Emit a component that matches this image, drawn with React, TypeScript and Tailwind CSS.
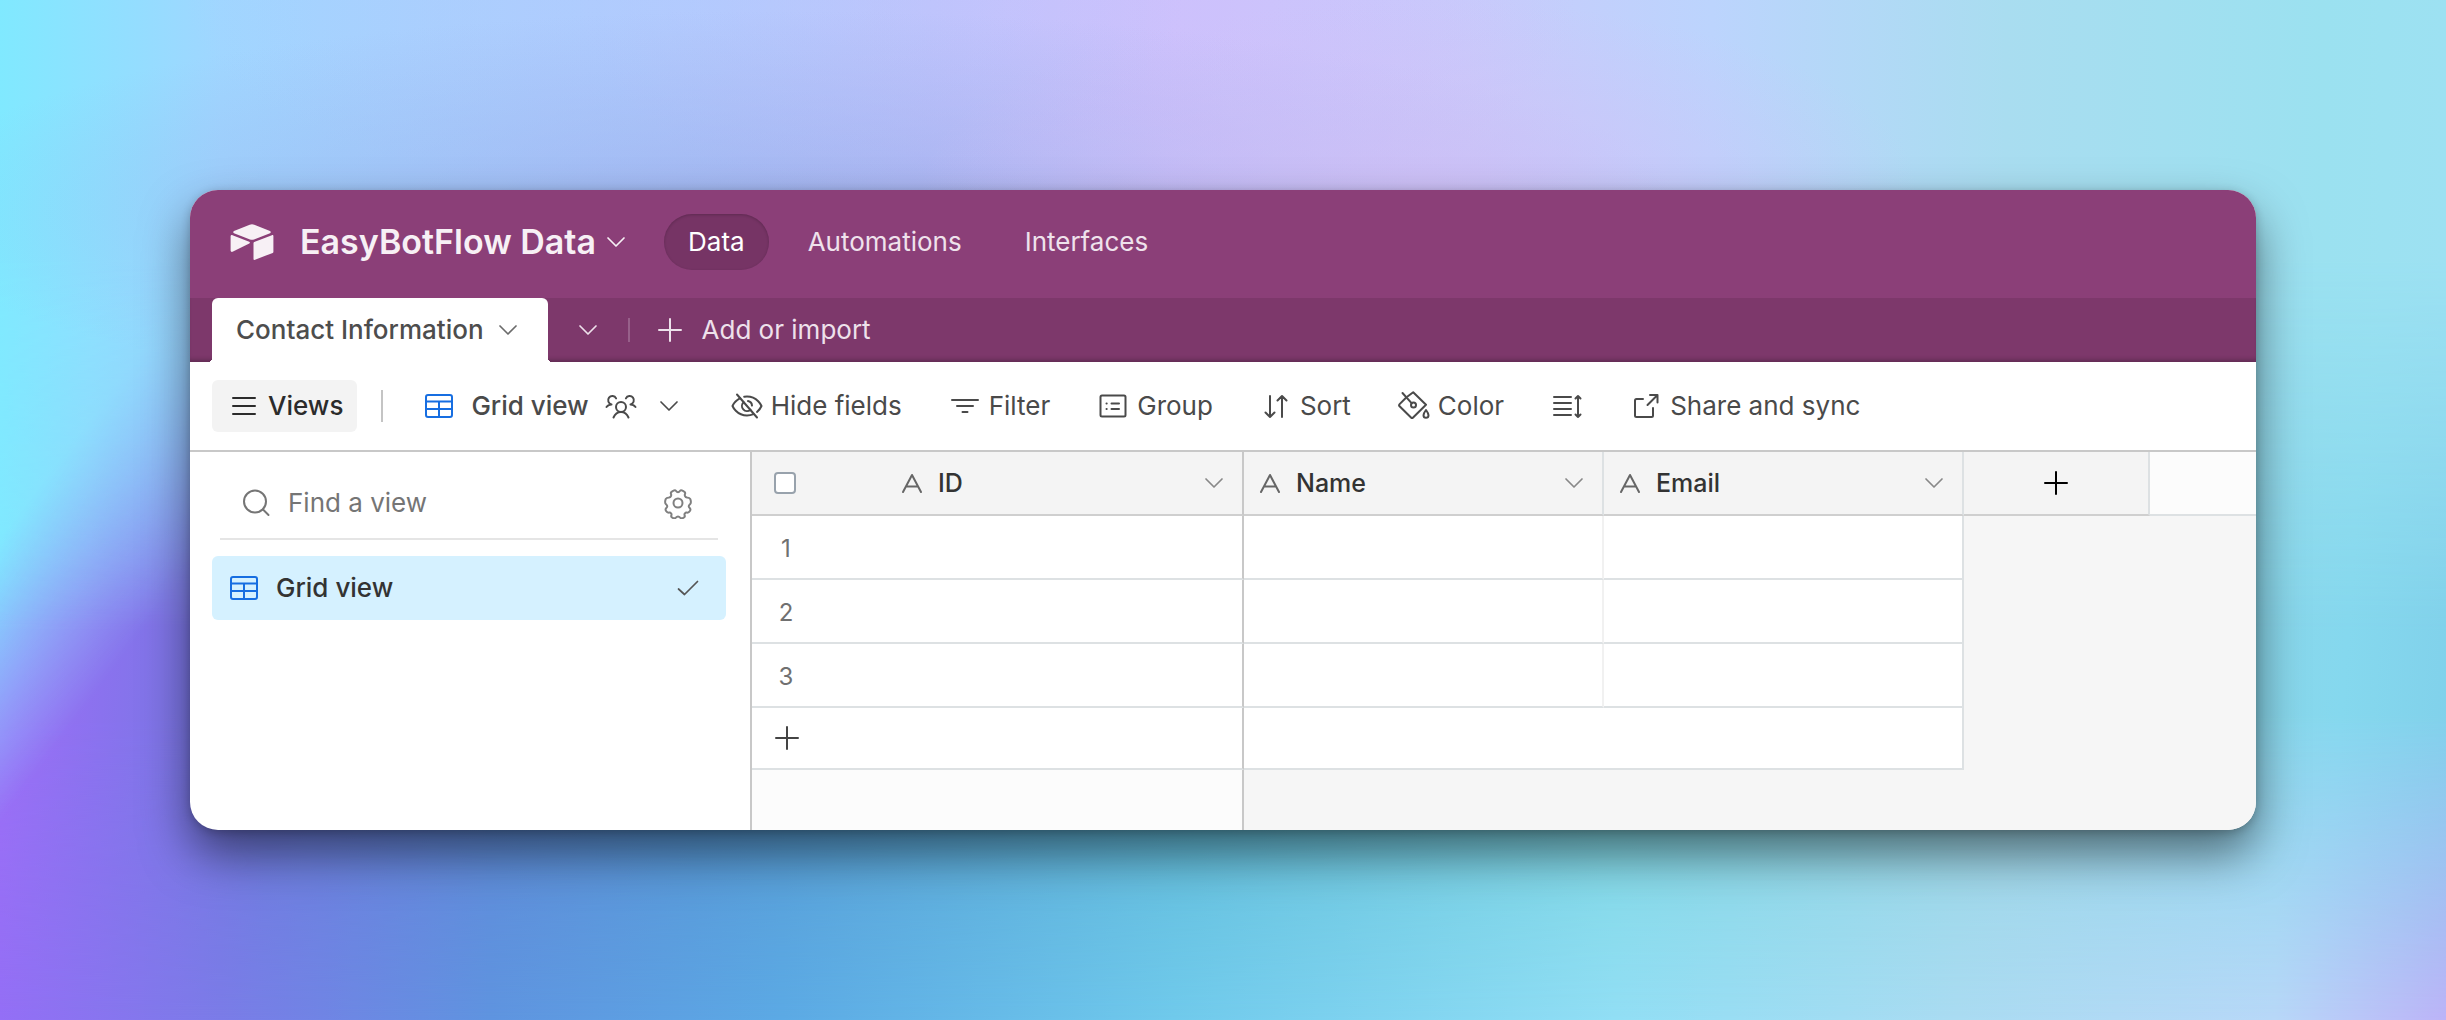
import { ReactNode } from 'react';
import clsx from 'clsx';

const Icon = ({
  className,
  strokeWidth = 2,
  children,
}: {
  className?: string;
  strokeWidth?: number;
  children: ReactNode;
}) => (
  <svg
    viewBox="0 0 32 32"
    fill="none"
    stroke="currentColor"
    strokeWidth={strokeWidth}
    strokeLinecap="round"
    strokeLinejoin="round"
    aria-hidden="true"
    className={clsx('size-8 shrink-0', className)}
  >
    {children}
  </svg>
);

const ChevronIcon = ({ className }: { className?: string }) => (
  <Icon className={className} strokeWidth={1.7}>
    <path d="M8 12l8 8 8-8" />
  </Icon>
);

const PlusIcon = ({ className }: { className?: string }) => (
  <Icon className={className}>
    <path d="M5 16h22M16 5v22" />
  </Icon>
);

const GridIcon = () => (
  <Icon className="text-[#176ee1]">
    <rect x="3" y="5" width="26" height="22" rx="2" />
    <path d="M3 11.5h26M3 19h26M16 11.5V27" />
  </Icon>
);

const MenuIcon = () => (
  <Icon>
    <path d="M5 8h22M5 16h22M5 24h22" />
  </Icon>
);

const PeopleIcon = () => (
  <Icon>
    <circle cx="16" cy="17" r="5" />
    <path d="M8.5 27.5c1.5-3.5 4.2-5.5 7.5-5.5s6 2 7.5 5.5" />
    <path d="M1.5 17c1.2-1.7 2.8-2.6 5-2.6a4.2 4.2 0 1 1 4.6-6" />
    <path d="M30.5 17c-1.2-1.7-2.8-2.6-5-2.6a4.2 4.2 0 1 0-4.6-6" />
  </Icon>
);

const HiddenIcon = () => (
  <Icon>
    <path d="M6 4.5l20 23" />
    <path d="M9.2 8.2C3.8 11 1.5 16 1.5 16S5.500 25.5 16 25.5c2.5 0 4.700-.6 6.500-1.400" />
    <path d="M13.200 6.700c.9-.1 1.800-.2 2.800-.2C26.500 6.500 30.500 16 30.500 16s-1.300 3.200-4.500 5.900" />
    <path d="M12.600 12.300a5 5 0 0 0 6.800 7.400M17 11.100a5 5 0 0 1 4 4.500" />
  </Icon>
);

const FilterIcon = () => (
  <Icon>
    <path d="M3 10h26M8 16h16M13.500 22h5" />
  </Icon>
);

const GroupIcon = () => (
  <Icon>
    <rect x="3.500" y="5.500" width="25" height="21" rx="1.500" />
    <path d="M9.500 13.500h.2M9.500 19h.2M14.500 13.500h7.500M14.500 19h7.500" />
  </Icon>
);

const SortIcon = () => (
  <Icon>
    <path d="M10 6v21M5.500 22.500L10 27l4.500-4.500M22 27V6M17.500 10.500L22 6l4.500 4.500" />
  </Icon>
);

const ColorIcon = () => (
  <Icon>
    <path d="M4.500 3l9.300 10.300" />
    <circle cx="15.500" cy="15" r="2.500" />
    <path d="M8 7.700l-6.400 6.400a1.500 1.500 0 0 0 0 2.100L13 27.500a1.500 1.500 0 0 0 2.100 0L28 14.800 15.200 2.200 9.500 6.500" />
    <path d="M28 20s-2.500 3.300-2.500 5.300a2.500 2.500 0 0 0 5 0C30.500 23.300 28 20 28 20z" />
  </Icon>
);

const RowHeightIcon = () => (
  <Icon>
    <path d="M3 7h17M3 13h17M3 19h17M3 25h17M27 6v21M24.500 8.500L27 6l2.500 2.500M24.500 24.500L27 27l2.500-2.500" />
  </Icon>
);

const ShareIcon = () => (
  <Icon>
    <path d="M13 9H6.500A1.500 1.500 0 0 0 5 10.500v15A1.500 1.500 0 0 0 6.500 27h15a1.500 1.500 0 0 0 1.500-1.500V18" />
    <path d="M17.500 15L27.500 5M20 5h7.500v7.500" />
  </Icon>
);

const SearchIcon = () => (
  <Icon className="text-[#757575]">
    <circle cx="15" cy="14.500" r="11" />
    <path d="M23 22.500l5.500 5.500" />
  </Icon>
);

// six rounded teeth around the hub
const GearIcon = () => (
  <Icon>
    <circle cx="16" cy="16" r="4.500" />
    <path d="M11.500 3.700c1-.6 2-.5 2.600.3.500.8 1 1.200 1.900 1.200s1.400-.4 1.900-1.200c.6-.8 1.600-.9 2.600-.3l1.600.9c1 .6 1.300 1.500.9 2.400-.4.900-.3 1.500.1 2.200.4.800 1 1.100 1.900 1.200 1.600.1 2.800.6 3.200 1.500.9 2.300 1.100 4.100-.2 5.300-.7.600-1.300 1.100-1.300 2 0 .8.600 1.400 1.200 2 .8.800.6 1.800 0 2.800-.7 1.200-1.600 1.800-2.800 1.600-.9-.2-1.600-.1-2.200.7-.5.600-.6 1.300-.2 2.200.4 1-.1 1.700-1 2.200-1.200.7-2.700 1-3.600 0-.6-.8-1.200-1.200-2.100-1.200s-1.500.4-2.100 1.200c-.9 1-2.400.7-3.600 0-.9-.500-1.400-1.200-1-2.200.4-.9.300-1.600-.2-2.200-.6-.8-1.300-.9-2.200-.7-1.200.2-2.100-.4-2.800-1.600-.6-1-.8-2 0-2.800.6-.6 1.200-1.200 1.200-2 0-.9-.6-1.400-1.300-2-1.300-1.200-1.100-3-.2-5.300.4-.9 1.600-1.400 3.200-1.500.9-.1 1.500-.4 1.900-1.200.4-.7.500-1.300.1-2.200-.4-.9-.1-1.800.9-2.400z" />
  </Icon>
);

const CheckIcon = () => (
  <Icon className="text-[#555555]" strokeWidth={1.7}>
    <path d="M6.500 17l6 5.500L25.500 9.500" />
  </Icon>
);

const TextFieldIcon = () => (
  <Icon className="text-[#666666]">
    <path d="M7 25l9-17 9 17M10 19.500h12" />
  </Icon>
);

const Logo = () => (
  <svg viewBox="0 0 44 36" fill="currentColor" aria-hidden="true" className="h-9 w-11 shrink-0">
    <path d="M19.700.7L4 7.100c-1 .4-1 1.700 0 2.100l16 6.200c1.300.5 2.700.5 4 0l16-6.200c1-.4 1-1.700 0-2.100L24.300.7a6 6 0 0 0-4.600 0z" />
    <path d="M23.500 19.100v15.800c0 .7.800 1.200 1.500.9l17.700-6.900c.4-.2.700-.5.700-1V12.100c0-.7-.8-1.200-1.500-.9l-17.700 6.900c-.4.200-.7.600-.7 1z" />
    <path d="M19.300 19.500L2.500 27.800c-.8.400-1.900-.2-1.900-1.200V12.300c0-.8 1-1.500 1.900-1.100l16.700 6.500c1 .4 1 1.300.1 1.800z" />
  </svg>
);

const navItems = ['Data', 'Automations', 'Interfaces'];

const toolbarItems = [
  { label: 'Hide fields', icon: <HiddenIcon /> },
  { label: 'Filter', icon: <FilterIcon /> },
  { label: 'Group', icon: <GroupIcon /> },
  { label: 'Sort', icon: <SortIcon /> },
  { label: 'Color', icon: <ColorIcon /> },
  { label: '', icon: <RowHeightIcon /> },
  { label: 'Share and sync', icon: <ShareIcon /> },
];

const rows = [1, 2, 3];

const Header = () => (
  <header className="flex h-[108px] items-start bg-[#8b3f78] pt-6 pl-10 text-[#f7f0f5]">
    <div className="flex h-14 items-center">
      <Logo />
      <button type="button" className="ml-[26px] flex items-center gap-1">
        <h1 className="text-[34px] leading-10 font-semibold">EasyBotFlow Data</h1>
        <ChevronIcon />
      </button>
      <nav className="ml-8 flex gap-[15px]">
        {navItems.map((item, index) => (
          <a
            key={item}
            href="#"
            className={clsx(
              'flex h-14 items-center rounded-full px-6',
              index === 0
                ? 'bg-[#763465] text-white shadow-[inset_0_1px_3px_rgba(0,0,0,0.2)]'
                : 'text-[#efe2ec]',
            )}
          >
            {item}
          </a>
        ))}
      </nav>
    </div>
  </header>
);

const TabBar = () => (
  <div className="flex h-16 items-center gap-6 bg-[#7d386b] pl-[22px] text-[#eee1eb] shadow-[inset_0_-5px_5px_-3px_rgba(0,0,0,0.25)]">
    <button
      type="button"
      className="relative flex h-16 items-center gap-2 rounded-t-md bg-white px-6 font-medium text-[#4d4d4d]"
    >
      Contact Information
      <ChevronIcon className="text-[#6b6b6b]" />
      <span className="absolute bottom-0 -left-1 size-1 bg-[radial-gradient(circle_at_top_left,transparent_4px,white_4px)]" />
      <span className="absolute -right-1 bottom-0 size-1 bg-[radial-gradient(circle_at_top_right,transparent_4px,white_4px)]" />
    </button>
    <button type="button" aria-label="All tables">
      <ChevronIcon />
    </button>
    <div className="h-6 w-0.5 bg-[#97608a]" />
    <button type="button" className="flex items-center gap-4">
      <PlusIcon />
      Add or import
    </button>
  </div>
);

const Toolbar = () => (
  <div className="flex h-[90px] items-center border-b-2 border-[#c8c8c8] pl-[22px] text-[#4a4a4a]">
    <button
      type="button"
      className="flex h-[52px] items-center gap-2 rounded-md bg-[#f3f3f3] pr-3.5 pl-4 font-medium text-[#2b2b2b]"
    >
      <MenuIcon />
      Views
    </button>
    <div className="ml-6 h-8 w-0.5 bg-[#c4c4c4]" />
    <button type="button" className="ml-10 flex items-center gap-4 font-medium">
      <GridIcon />
      Grid view
      <PeopleIcon />
      <ChevronIcon />
    </button>
    <div className="ml-[46px] flex items-center gap-[47px]">
      {toolbarItems.map(({ label, icon }) => (
        <button
          key={label}
          type="button"
          aria-label={label || 'Row height'}
          className="flex items-center gap-2 whitespace-nowrap"
        >
          {icon}
          {label}
        </button>
      ))}
    </div>
  </div>
);

const Sidebar = () => (
  <aside className="w-[562px] shrink-0 border-r-2 border-[#c8c8c8] pt-4 pr-6 pl-[22px]">
    <div className="mx-2 flex h-[72px] items-center gap-4 border-b-2 border-[#e5e5e5] pr-6 pl-5">
      <SearchIcon />
      <input
        type="text"
        aria-label="Find a view"
        placeholder="Find a view"
        className="min-w-0 flex-1 outline-none placeholder:text-[#757575]"
      />
      <button type="button" aria-label="View settings" className="text-[#808080]">
        <GearIcon />
      </button>
    </div>
    <button
      type="button"
      className="mt-4 flex h-16 w-full items-center gap-4 rounded-md bg-[#d5f1ff] pr-[22px] pl-4 font-medium text-[#333333]"
    >
      <GridIcon />
      Grid view
      <span className="ml-auto">
        <CheckIcon />
      </span>
    </button>
  </aside>
);

const FieldHeader = ({ name }: { name: string }) => (
  <div className="flex flex-1 items-center gap-2.5 pr-3 pl-2.5">
    <TextFieldIcon />
    {name}
    <button type="button" aria-label={`${name} options`} className="ml-auto text-[#888888]">
      <ChevronIcon />
    </button>
  </div>
);

const Grid = () => (
  <table className="min-w-0 flex-1 table-fixed border-separate border-spacing-0 bg-[#f6f6f6] text-left">
    <colgroup>
      <col className="w-[492px]" />
      <col className="w-[360px]" />
      <col className="w-[360px]" />
      <col className="w-[186px]" />
      <col />
    </colgroup>
    <thead className="text-[25px] text-[#333333]">
      <tr className="h-16 bg-[#f4f4f4] [&>th]:border-b-2 [&>th]:border-b-[#cfcfcf] [&>th]:p-0 [&>th]:font-medium">
        <th className="border-r-2 border-r-[#c8c8c8]">
          <div className="flex items-center pl-[22px]">
            <input
              type="checkbox"
              aria-label="Select all rows"
              className="mr-[90px] size-[22px] appearance-none rounded-sm border-2 border-[#98a2ac] bg-white"
            />
            <FieldHeader name="ID" />
          </div>
        </th>
        <th className="border-r-2 border-r-[#dde1e3]">
          <FieldHeader name="Name" />
        </th>
        <th className="border-r-2 border-r-[#dde1e3]">
          <FieldHeader name="Email" />
        </th>
        <th className="border-r-2 border-r-[#dde1e3]">
          <button type="button" aria-label="Add field" className="flex w-full justify-center text-black">
            <PlusIcon />
          </button>
        </th>
        <td className="border-b-2 border-[#dde1e3] bg-[#fcfcfc]" />
      </tr>
    </thead>
    <tbody>
      {rows.map((row) => (
        <tr key={row} className="h-16 [&>td]:border-b-2 [&>td]:border-b-[#dde1e3] [&>td]:bg-white [&>td]:p-0">
          <td className="border-r-2 border-r-[#c8c8c8] text-2xl text-[#707070]">
            <span className="block w-[68px] pt-1 text-center">{row}</span>
          </td>
          <td className="border-r-2 border-r-[#f1f1f1]" />
          <td className="border-r-2 border-r-[#dde1e3]" />
        </tr>
      ))}
      <tr className="h-[62px] [&>td]:border-b-2 [&>td]:border-b-[#dde1e3] [&>td]:bg-white [&>td]:p-0">
        <td className="border-r-2 border-r-[#c8c8c8]">
          <button type="button" aria-label="Add row" className="flex w-[70px] justify-center text-[#444444]">
            <PlusIcon />
          </button>
        </td>
        <td colSpan={2} className="border-r-2 border-r-[#dde1e3]" />
      </tr>
      <tr className="h-[60px]">
        <td className="border-r-2 border-[#c8c8c8] bg-[#fcfcfc]" />
      </tr>
    </tbody>
  </table>
);

const Backdrop = () => (
  <div className="absolute inset-0 -z-10 overflow-hidden bg-[linear-gradient(90deg,#946ff6_0%,#7b7ce8_9%,#5f94e0_20%,#5caae5_32%,#70caec_48%,#92dff5_66%,#aadcf2_80%,#b8d8f8_93%,#bcb4f8_100%)]">
    <div className="absolute inset-0 bg-[linear-gradient(94deg,#a66dfb_0%,#8a72ee_6%,#6c7bdc_13%,#5593d0_30%,#5db9d4_50%,#78d4dc_66%,#96d4e2_82%,#85d8ee_95%,#80d0ea_100%)] mask-[linear-gradient(180deg,black_70%,transparent_100%)]" />
    {/* cyan left edge, cut off along a diagonal */}
    <div className="absolute inset-y-0 left-0 w-[300px] bg-[linear-gradient(90deg,#80e9ff_0%,#8cd8fb_30%,#88bcf2_65%)] mask-[linear-gradient(127deg,black_38%,transparent_58%)]" />
    <div className="absolute inset-0 bg-[linear-gradient(90deg,#80e9ff_0%,#a0d6ff_9%,#aecbfd_24%,#bdc0f9_38%,#cec2fb_48%,#c8cbfb_60%,#bcd4fd_70%,#a9ddf0_82%,#9be1f0_95%,#9de1f2_100%)] mask-[linear-gradient(180deg,black_25%,transparent_62%)]" />
    <div className="absolute inset-x-0 top-0 h-[420px] bg-[radial-gradient(500px_190px_at_58%_45%,rgba(210,190,246,0.7),transparent),radial-gradient(900px_200px_at_32%_50%,rgba(150,172,235,0.6),transparent),radial-gradient(500px_200px_at_28%_0%,rgba(176,205,255,0.6),transparent),radial-gradient(500px_240px_at_44%_0%,rgba(204,192,253,0.7),transparent)]" />
  </div>
);

const App = () => {
  return (
    <main className="relative isolate min-h-screen p-[190px] font-['Inter',sans-serif] text-[26px] leading-8">
      <Backdrop />
      <div className="overflow-hidden rounded-[28px] bg-white shadow-[0_24px_48px_rgba(0,0,0,0.5),0_2px_10px_rgba(0,0,0,0.2)]">
        <Header />
        <TabBar />
        <Toolbar />
        <div className="flex">
          <Sidebar />
          <Grid />
        </div>
      </div>
    </main>
  );
};

export default App;
